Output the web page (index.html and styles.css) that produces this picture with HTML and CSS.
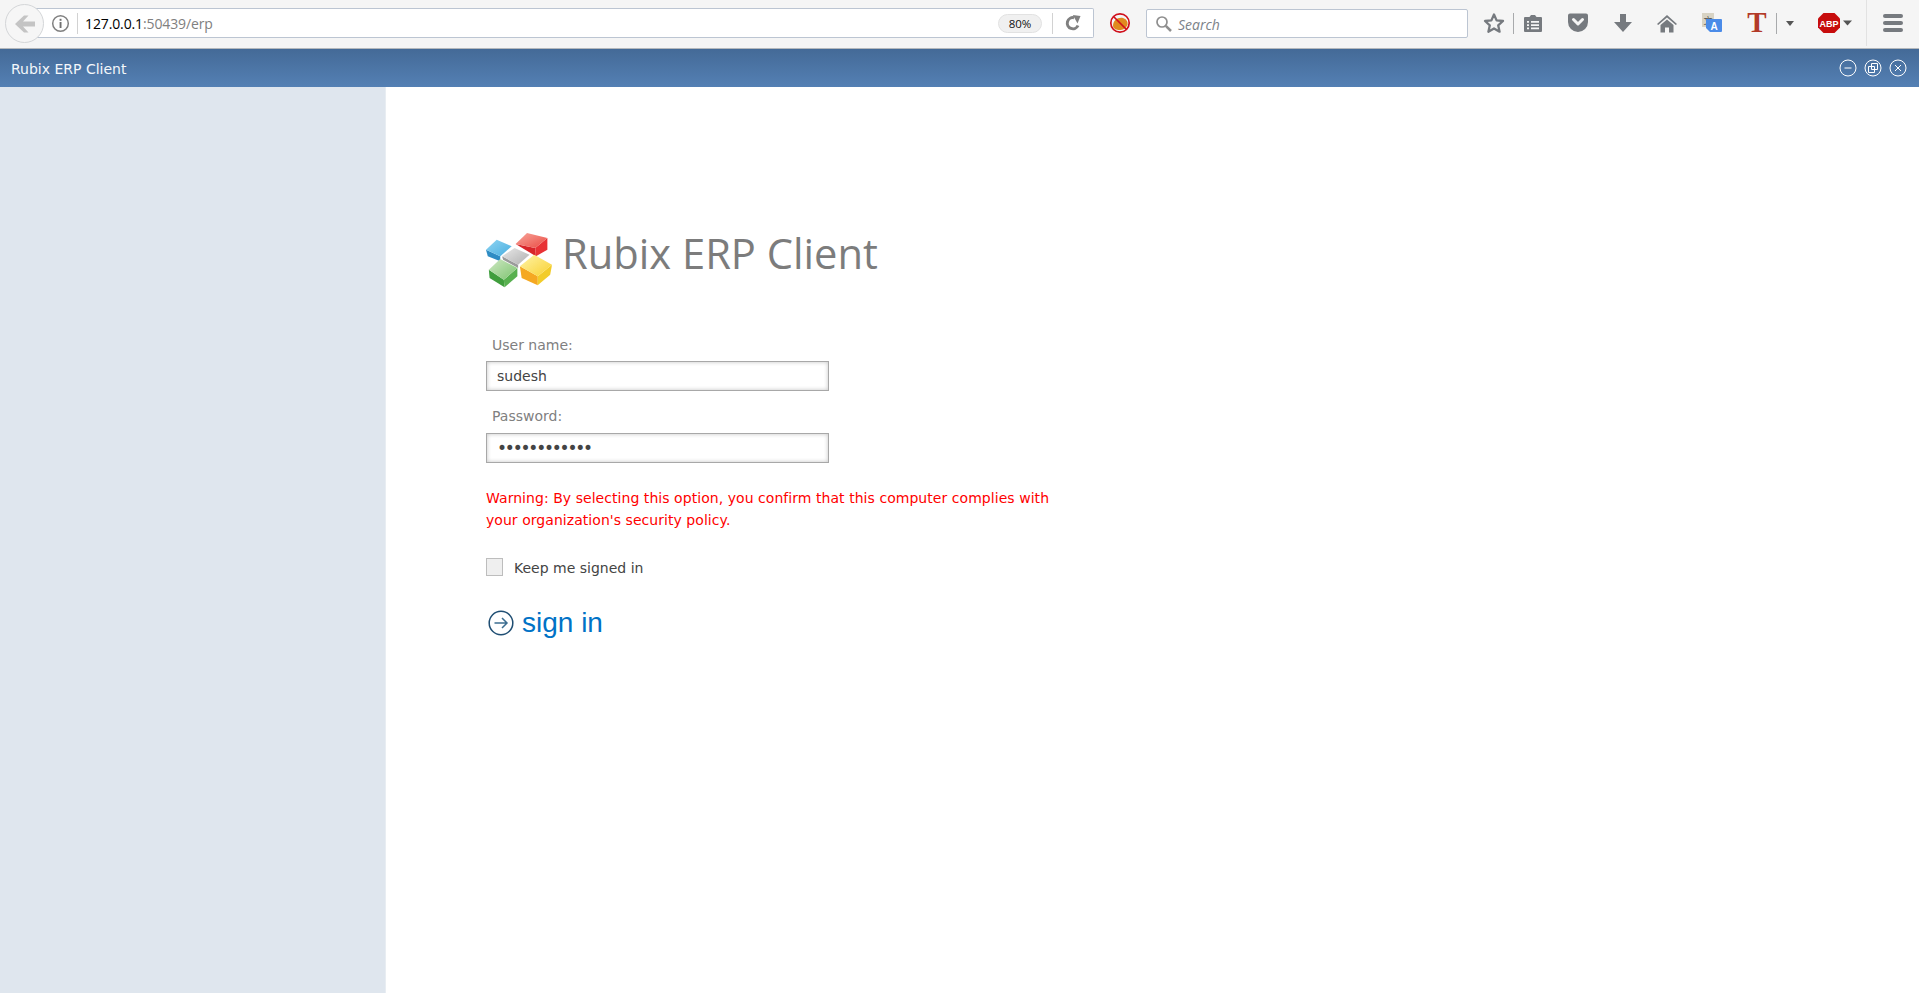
FILE: index.html
```html
<!DOCTYPE html>
<html lang="en">
<head>
<meta charset="utf-8">
<title>Rubix ERP Client</title>
<link rel="stylesheet" href="styles.css">
</head>
<body>
<div class="toolbar">
  <div class="back">
    <svg width="22" height="20" viewBox="0 0 22 20"><path d="M1 10 10 1.500h4.500L9 7.500h12v5H9l5.500 6H10z" fill="#c4c4c4"/></svg>
  </div>
  <div class="urlbar">
    <svg class="info" width="19" height="19" viewBox="0 0 19 19"><circle cx="9.500" cy="9.500" r="7.800" fill="none" stroke="#808080" stroke-width="1.500"/><rect x="8.600" y="8" width="1.900" height="6" fill="#707070"/><rect x="8.600" y="4.800" width="1.900" height="2" fill="#707070"/></svg>
    <span class="vsep"></span>
    <span class="url"><span class="url-host">127.0.0.1</span>:50439/erp</span>
    <span class="zoompill">80%</span>
    <span class="vsep vsep-reload"></span>
    <svg class="reload" width="16" height="16" viewBox="0 0 16 16"><path d="M13 10.500A5.600 5.600 0 1 1 9 2.700" fill="none" stroke="#808080" stroke-width="3"/><path d="M7.800 0 15.500 1 12.500 8.500z" fill="#808080"/></svg>
  </div>
  <div class="noscript">
    <svg width="22" height="22" viewBox="0 0 22 22"><path d="M4 14c0-6 5-9 10-8 3 1 5 3 4.500 7-2 4-5 5-8 5-3 0-6-1-6.500-4z" fill="#e08a1e"/><circle cx="11" cy="11" r="9.200" fill="none" stroke="#d0101c" stroke-width="1.700"/><path d="M4.500 4.500 17.500 17.500" stroke="#d0101c" stroke-width="1.700"/></svg>
  </div>
  <div class="searchbar">
    <svg width="18" height="18" viewBox="0 0 18 18"><circle cx="7" cy="7" r="5" fill="none" stroke="#8e8e8e" stroke-width="1.700"/><path d="M10.800 10.800 16 16" stroke="#8e8e8e" stroke-width="2.500"/></svg>
    <span class="search-text">Search</span>
  </div>
  <div class="tools">
    <span class="slot s-star"><svg width="22" height="22" viewBox="0 0 22 22"><path d="M11 2.500 13.600 8.400 20 9 15.200 13.300 16.600 19.700 11 16.400 5.400 19.700 6.800 13.300 2 9 8.400 8.400z" fill="none" stroke="#767a7f" stroke-width="2.300" stroke-linejoin="round"/></svg></span>
    <span class="tsep s-sep1"></span>
    <span class="slot s-reader"><svg width="20" height="20" viewBox="0 0 20 20"><path d="M1 5a1 1 0 0 1 1-1h4.500L8 2h4l1.500 2H18a1 1 0 0 1 1 1v13a1 1 0 0 1-1 1H2a1 1 0 0 1-1-1z" fill="#767a7f"/><path d="M4 8h2v1.800H4zM8 8h8v1.800H8zM4 11.200h2V13H4zM8 11.200h8V13H8zM4 14.400h2v1.800H4zM8 14.400h8v1.800H8z" fill="#f5f5f5"/></svg></span>
    <span class="slot s-pocket"><svg width="22" height="20" viewBox="0 0 22 20"><path d="M1 2.500A2 2 0 0 1 3 .5h16a2 2 0 0 1 2 2V9a10 10 0 0 1-20 0z" fill="#767a7f"/><path d="M6.500 6.500 11 11l4.500-4.500" fill="none" stroke="#f5f5f5" stroke-width="3" stroke-linecap="round" stroke-linejoin="round"/></svg></span>
    <span class="slot s-download"><svg width="18" height="20" viewBox="0 0 18 20"><path d="M6 1h6v8h6l-9 10L0 9h6z" fill="#767a7f"/></svg></span>
    <span class="slot s-home"><svg width="20" height="19" viewBox="0 0 20 19"><path d="M10 1 0 10l1.200 1L10 3.500 18.800 11l1.200-1zM3.500 11 10 5.500l6.500 5.500v7.500H12v-5H8v5H3.500z" fill="#767a7f"/></svg></span>
    <span class="slot s-translate"><svg width="20" height="20" viewBox="0 0 20 20"><rect x="0" y="0" width="12" height="14" fill="#d8d3c4"/><text x="1.500" y="10.500" class="tr-zh">文</text><path d="M4 6h15a1 1 0 0 1 1 1v11a1 1 0 0 1-1 1H8l-4-4z" fill="#4a8be8"/><text x="8.500" y="16.500" class="tr-a">A</text></svg></span>
    <span class="slot s-fontT"><svg width="26" height="36" viewBox="0 0 26 36"><text x="13" y="27" class="tr-t">T</text></svg></span>
    <span class="tsep s-sep2"></span>
    <span class="slot s-drop"><span class="caret"></span></span>
    <span class="slot s-abp"><svg width="40" height="22" viewBox="0 0 40 22"><path d="M8.500 1h11L25 6.500v9L19.500 21h-11L3 15.500v-9z" fill="#c70d0d"/><text x="14" y="15" class="abp-text">ABP</text><path d="M28 8.500h9l-4.500 5z" fill="#555"/></svg></span>
    <span class="tsep tsep-light s-sep3"></span>
    <span class="slot s-menu"><span class="burger"><i></i><i></i><i></i></span></span>
  </div>
</div>

<header class="titlebar">
  <span class="app-title">Rubix ERP Client</span>
  <div class="winctl">
    <svg width="18" height="18" viewBox="0 0 18 18"><circle cx="9" cy="9" r="8" fill="none" stroke="#fff" stroke-width="1"/><path d="M5.500 9h7" stroke="#fff"/></svg>
    <svg width="18" height="18" viewBox="0 0 18 18"><circle cx="9" cy="9" r="8" fill="none" stroke="#fff" stroke-width="1"/><path d="M7.500 4.500h6v6h-6zM4.500 7.500h6v6h-6z" fill="none" stroke="#fff"/></svg>
    <svg width="18" height="18" viewBox="0 0 18 18"><circle cx="9" cy="9" r="8" fill="none" stroke="#fff" stroke-width="1"/><path d="M6 6l6 6M12 6l-6 6" stroke="#fff"/></svg>
  </div>
</header>

<div class="main">
  <aside class="sidebar"></aside>
  <section class="content">
    <div class="brand">
      <svg class="logo" width="66" height="56" viewBox="60 52 185 168" preserveAspectRatio="none">
        <defs>
          <filter id="soft"><feGaussianBlur stdDeviation="1"/></filter>
          <linearGradient id="gb" x1="0" y1="0" x2="1" y2="1"><stop offset="0" stop-color="#8fd4f2"/><stop offset="1" stop-color="#48aee0"/></linearGradient>
          <linearGradient id="gr" x1="0" y1="0" x2="1" y2="1"><stop offset="0" stop-color="#f8a79c"/><stop offset="1" stop-color="#ea4a42"/></linearGradient>
          <linearGradient id="gs" x1="0" y1="0" x2="1" y2="1"><stop offset="0" stop-color="#e8e8e8"/><stop offset="1" stop-color="#b0b0b0"/></linearGradient>
          <linearGradient id="gg" x1="0" y1="0" x2="1" y2="1"><stop offset="0" stop-color="#cfe8c4"/><stop offset="1" stop-color="#7cc36e"/></linearGradient>
          <linearGradient id="gy" x1="0" y1="0" x2="1" y2="1"><stop offset="0" stop-color="#fff4a8"/><stop offset="1" stop-color="#f8d030"/></linearGradient>
        </defs>
        <g filter="url(#soft)">
          <path d="M60 105 100 125 100 140 65 125z" fill="#2f8cc4"/>
          <path d="M60 105 90 75 132 95 100 125z" fill="url(#gb)"/>
          <path d="M143 88 198 100 200 125z" fill="#d8262a"/>
          <path d="M232 70 198 100 200 125 232 105z" fill="#e83034"/>
          <path d="M143 88 175 55 232 70 198 100z" fill="url(#gr)"/>
          <path d="M105 125 150 150 150 160 108 135z" fill="#9a9a9a"/>
          <path d="M105 125 140 100 182 120 150 150z" fill="url(#gs)"/>
          <path d="M68 165 110 195 112 218 70 190z" fill="#3f9e3e"/>
          <path d="M148 160 110 195 112 218 148 185z" fill="#58b050"/>
          <path d="M68 165 100 133 148 160 110 195z" fill="url(#gg)"/>
          <path d="M155 155 205 185 205 212 160 190z" fill="#f5a820"/>
          <path d="M245 150 205 185 205 212 240 180z" fill="#f2cc2a"/>
          <path d="M155 155 195 120 245 150 205 185z" fill="url(#gy)"/>
        </g>
      </svg>
      <span class="brand-name">Rubix ERP Client</span>
    </div>
    <form class="login">
      <label class="field-label" for="user">User name:</label>
      <input class="field" id="user" type="text" value="sudesh">
      <label class="field-label field-label-2" for="pass">Password:</label>
      <input class="field field-pass" id="pass" type="password" value="abcdefghijkl">
      <p class="warning">Warning: By selecting this option, you confirm that this computer complies with your organization's security policy.</p>
      <div class="keep"><span class="check"></span><span class="keep-text">Keep me signed in</span></div>
      <a class="signin">
        <svg width="26" height="26" viewBox="0 0 26 26"><circle cx="13" cy="13" r="11.800" fill="none" stroke="#1f4e73" stroke-width="1.500"/><path d="M6.500 13H19M14 8l5 5-5 5" fill="none" stroke="#3c6d90" stroke-width="1.500"/></svg>
        <span>sign in</span>
      </a>
    </form>
  </section>
</div>
</body>
</html>
```
FILE: styles.css
```css
* { box-sizing: border-box; }
html, body { margin: 0; height: 100%; overflow: hidden; background: #fff; }
body { display: flex; flex-direction: column; height: 993px; font-family: "DejaVu Sans", sans-serif; }

/* browser chrome */
.toolbar { height: 49px; flex: none; background: #f5f5f5; border-bottom: 1px solid #b4b8bc; display: flex; align-items: center; padding-left: 5px; padding-bottom: 2px; }
.back { width: 39px; height: 39px; flex: none; margin-top: 1px; border-radius: 50%; background: #f6f6f6; border: 1px solid #d4d6d8; display: flex; align-items: center; justify-content: center; position: relative; z-index: 1; }
.urlbar { width: 1068px; height: 30px; margin-left: -18px; flex: none; background: #fff; border: 1px solid #bcc5d2; border-left: 0; border-radius: 0 2px 2px 0; display: flex; align-items: center; padding-left: 25px; }
.info { flex: none; }
.vsep { width: 1px; height: 21px; background: #d2d2d2; margin-left: 7px; flex: none; }
.url { font: 14px "Open Sans", sans-serif; color: #808080; margin-left: 7px; padding-top: 1px; letter-spacing: -0.12px; flex: 1; white-space: nowrap; }
.url-host { color: #000; }
.zoompill { width: 44px; height: 19px; flex: none; background: #f0f0f0; border: 1px solid #e2e2e2; border-radius: 10px; font: 11.500px/17px "Open Sans", sans-serif; color: #111; text-align: center; }
.vsep-reload { margin-left: 10px; }
.reload { margin: 0 12px 0 12px; flex: none; }
.noscript { width: 52px; flex: none; display: flex; justify-content: center; }
.searchbar { width: 322px; height: 29px; flex: none; margin-top: 1px; background: #fff; border: 1px solid #bcc5d2; border-radius: 2px; display: flex; align-items: center; padding-left: 8px; }
.search-text { font: italic 14px "Open Sans", sans-serif; color: #7b8288; margin-left: 5px; padding-top: 1px; }
.tools { display: grid; grid-template-columns: 12px 28px 5px 1px 38px 52px 38px 50px 40px 6px 38px 1px 25px 13px 40px 11px 1px 52px; align-items: center; height: 46px; flex: none; }
.slot { display: flex; align-items: center; justify-content: center; }
.s-star { grid-column: 2; }
.s-sep1 { grid-column: 4; }
.s-reader { grid-column: 5; }
.s-pocket { grid-column: 6; }
.s-download { grid-column: 7; }
.s-home { grid-column: 8; }
.s-translate { grid-column: 9; }
.s-fontT { grid-column: 11; }
.s-sep2 { grid-column: 12; }
.s-drop { grid-column: 13; }
.s-abp { grid-column: 15; }
.s-sep3 { grid-column: 17; }
.s-menu { grid-column: 18; }
.tools > * { grid-row: 1; }
.tsep { width: 1px; height: 21px; background: #a8aaac; justify-self: center; }
.tsep-light { height: 46px; background: #e2e2e2; }
.caret { width: 0; height: 0; border: 4.500px solid transparent; border-top: 5px solid #555; border-bottom: 0; }
.burger { display: flex; flex-direction: column; gap: 3px; width: 20px; }
.burger i { display: block; height: 4px; border-radius: 2px; background: #767a7f; }
.tr-zh { font: 9px "Noto Sans CJK SC", sans-serif; fill: #555; }
.tr-a { font: bold 10px "Liberation Sans", sans-serif; fill: #fff; }
.tr-t { font: bold 29px "Liberation Serif", serif; text-anchor: middle; fill: #b23a28; }
.abp-text { font: bold 9px "Liberation Sans", sans-serif; fill: #fff; text-anchor: middle; }

/* application title bar */
.titlebar { height: 38px; flex: none; background: linear-gradient(#446a97, #5480b4); display: flex; align-items: center; justify-content: space-between; padding: 0 12px 0 11px; }
.app-title { font-size: 14px; color: #f4f7fb; padding-top: 1px; }
.winctl { display: flex; gap: 7px; }

/* page */
.main { flex: 1; display: flex; min-height: 0; }
.sidebar { width: 386px; flex: none; background: #dfe6ee; border-right: 1px solid #e8edf2; }
.content { flex: 1; padding: 145px 0 0 100px; }
.brand { display: flex; height: 56px; }
.brand-name { font: 41.700px/42px "Open Sans", sans-serif; color: #7c7c7c; margin-left: 10px; height: 42px; }
.login { display: flex; flex-direction: column; align-items: flex-start; width: 570px; padding-top: 49px; }
.field-label { font-size: 14px; line-height: 17px; color: #808080; margin-left: 6px; margin-bottom: 7px; }
.field-label-2 { margin-top: 17px; margin-bottom: 8px; }
.field { width: 343px; height: 30px; border: 1px solid #a8a8a8; box-shadow: inset 0 0 4px #c4c4c4; padding: 0 10px; font: 14px "DejaVu Sans", sans-serif; color: #444; outline: 0; }
.field-pass { font-size: 17px; letter-spacing: -2.200px; }
.warning { margin: 24px 0 0; font-size: 14px; line-height: 22px; letter-spacing: 0.05px; color: #f00; width: 570px; }
.keep { display: flex; align-items: center; margin-top: 28px; }
.check { width: 17px; height: 18px; background: #efefef; border: 1px solid #bdbdbd; margin-top: -1px; }
.keep-text { font-size: 14px; color: #444; margin-left: 11px; }
.signin { display: flex; align-items: center; margin: 31px 0 0 2px; font: 28px "Liberation Sans", sans-serif; color: #0072c6; gap: 8px; }
```
